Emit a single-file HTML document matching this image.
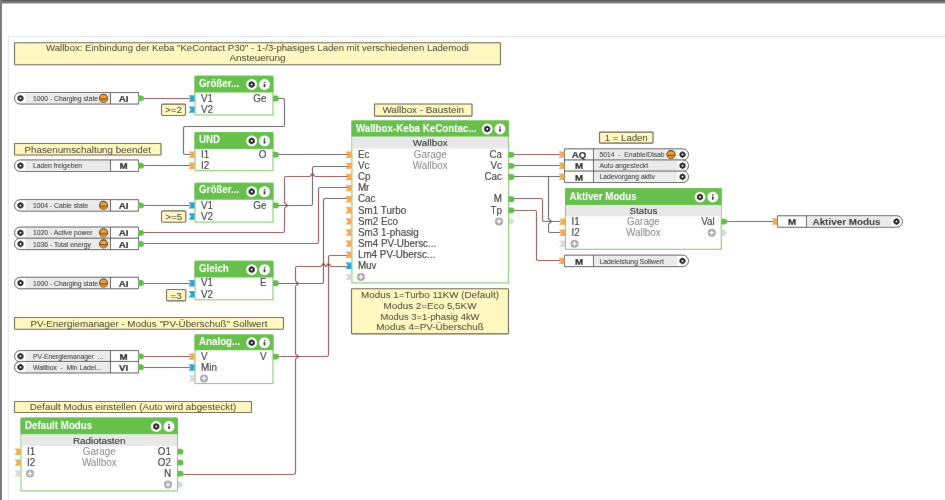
<!DOCTYPE html>
<html><head><meta charset="utf-8"><style>html,body{margin:0;padding:0;background:#fff;width:945px;height:500px;overflow:hidden}</style></head>
<body><svg width="945" height="500" viewBox="0 0 945 500" style="display:block;font-family:'Liberation Sans', sans-serif"><defs><filter id="bl" x="0" y="0" width="100%" height="100%" filterUnits="userSpaceOnUse"><feConvolveMatrix order="3" kernelMatrix="0.008 0.04 0.008 0.04 0.808 0.04 0.008 0.04 0.008" edgeMode="duplicate"/></filter></defs><g filter="url(#bl)"><rect x="0" y="0" width="945" height="500" fill="#fff"/>
<rect x="0" y="0" width="945" height="1" fill="#565656"/>
<rect x="0" y="1" width="945" height="1" fill="#7c7c7c"/>
<rect x="0" y="2" width="945" height="1" fill="#6a6a6a"/>
<rect x="0" y="3" width="945" height="1" fill="#c8c8c8"/>
<rect x="0" y="0" width="2" height="500" fill="#7a7a7a"/>
<line x1="8" y1="36.5" x2="945" y2="36.5" stroke="#e4e4e4" stroke-width="1"/>
<line x1="8.5" y1="36" x2="8.5" y2="500" stroke="#e8e8e8" stroke-width="1"/>
<path d="M143.50,98.50 L190.50,98.50" fill="none" stroke="#983c3c" stroke-width="1.1"/>
<path d="M276.50,98.50 L282.70,98.50 Q284.50,98.50 284.50,100.30 L284.50,124.70 Q284.50,126.50 282.70,126.50 L185.30,126.50 Q183.50,126.50 183.50,128.30 L183.50,152.70 Q183.50,154.50 185.30,154.50 L190.50,154.50" fill="none" stroke="#555555" stroke-width="1.1"/>
<path d="M143.50,165.50 L190.50,165.50" fill="none" stroke="#555555" stroke-width="1.1"/>
<path d="M276.50,154.50 L348.50,154.50" fill="none" stroke="#555555" stroke-width="1.1"/>
<path d="M143.50,205.50 L190.50,205.50" fill="none" stroke="#983c3c" stroke-width="1.1"/>
<path d="M276.50,205.50 L310.70,205.50 Q312.50,205.50 312.50,203.70 L312.50,168.30 Q312.50,166.50 314.30,166.50 L348.50,166.50" fill="none" stroke="#555555" stroke-width="1.1"/>
<path d="M143.50,232.50 L282.70,232.50 Q284.50,232.50 284.50,230.70 L284.50,208.50 Q284.50,207.30 286.70,206.40 Q288.10,205.50 286.70,204.60 Q284.50,203.70 284.50,202.50 L284.50,178.30 Q284.50,176.50 286.30,176.50 L309.50,176.50 Q310.70,176.50 311.60,174.30 Q312.50,172.90 313.40,174.30 Q314.30,176.50 315.50,176.50 L348.50,176.50" fill="none" stroke="#983c3c" stroke-width="1.1"/>
<path d="M143.50,243.50 L316.70,243.50 Q318.50,243.50 318.50,241.70 L318.50,189.30 Q318.50,187.50 320.30,187.50 L348.50,187.50" fill="none" stroke="#983c3c" stroke-width="1.1"/>
<path d="M143.50,283.50 L190.50,283.50" fill="none" stroke="#983c3c" stroke-width="1.1"/>
<path d="M276.50,283.50 L321.70,283.50 Q323.50,283.50 323.50,281.70 L323.50,200.30 Q323.50,198.50 325.30,198.50 L348.50,198.50" fill="none" stroke="#555555" stroke-width="1.1"/>
<path d="M180.50,474.50 L293.70,474.50 Q295.50,474.50 295.50,472.70 L295.50,359.50 Q295.50,358.30 297.70,357.40 Q299.10,356.50 297.70,355.60 Q295.50,354.70 295.50,353.50 L295.50,286.50 Q295.50,285.30 297.70,284.40 Q299.10,283.50 297.70,282.60 Q295.50,281.70 295.50,280.50 L295.50,268.30 Q295.50,266.50 297.30,266.50 L320.50,266.50 Q321.70,266.50 322.60,264.30 Q323.50,262.90 324.40,264.30 Q325.30,266.50 326.50,266.50 L325.50,266.50 Q326.70,266.50 327.60,264.30 Q328.50,262.90 329.40,264.30 Q330.30,266.50 331.50,266.50 L348.50,266.50" fill="none" stroke="#983c3c" stroke-width="1.1"/>
<path d="M276.50,356.50 L326.70,356.50 Q328.50,356.50 328.50,354.70 L328.50,257.30 Q328.50,255.50 330.30,255.50 L348.50,255.50" fill="none" stroke="#983c3c" stroke-width="1.1"/>
<path d="M143.50,356.50 L190.50,356.50" fill="none" stroke="#983c3c" stroke-width="1.1"/>
<path d="M143.50,367.50 L190.50,367.50" fill="none" stroke="#983c3c" stroke-width="1.1"/>
<path d="M511.50,154.50 L560.50,154.50" fill="none" stroke="#983c3c" stroke-width="1.1"/>
<path d="M511.50,165.50 L560.50,165.50" fill="none" stroke="#555555" stroke-width="1.1"/>
<path d="M511.50,176.50 L560.50,176.50" fill="none" stroke="#555555" stroke-width="1.1"/>
<path d="M548.50,176.50 L548.50,218.50 Q548.50,219.70 550.70,220.60 Q552.10,221.50 550.70,222.40 Q548.50,223.30 548.50,224.50 L548.50,230.70 Q548.50,232.50 550.30,232.50 L560.50,232.50" fill="none" stroke="#555555" stroke-width="1.1"/>
<path d="M511.50,198.50 L540.70,198.50 Q542.50,198.50 542.50,200.30 L542.50,219.70 Q542.50,221.50 544.30,221.50 L560.50,221.50" fill="none" stroke="#983c3c" stroke-width="1.1"/>
<path d="M511.50,210.50 L534.70,210.50 Q536.50,210.50 536.50,212.30 L536.50,258.70 Q536.50,260.50 538.30,260.50 L560.50,260.50" fill="none" stroke="#983c3c" stroke-width="1.1"/>
<path d="M724.50,221.50 L773.50,221.50" fill="none" stroke="#983c3c" stroke-width="1.1"/>
<rect x="14.5" y="42.7" width="486" height="22.0" rx="0.6" fill="#fff8c0" stroke="#625d4c" stroke-width="1.1"/>
<text transform="translate(257.50 50.80) scale(0.988 1)" font-size="9.7" font-weight="normal" fill="#33322b" text-anchor="middle" >Wallbox: Einbindung der Keba &quot;KeContact P30&quot; - 1-/3-phasiges Laden mit verschiedenen Lademodi</text>
<text transform="translate(257.50 60.90) scale(1.022 1)" font-size="9.7" font-weight="normal" fill="#33322b" text-anchor="middle" >Ansteuerung</text>
<rect x="14.5" y="143.5" width="146.5" height="11.5" rx="0.6" fill="#fff8c0" stroke="#625d4c" stroke-width="1.1"/>
<text transform="translate(87.75 152.80) scale(1.007 1)" font-size="9.7" font-weight="normal" fill="#33322b" text-anchor="middle" >Phasenumschaltung beendet</text>
<rect x="374.5" y="104.0" width="97.5" height="12.099999999999994" rx="0.6" fill="#fff8c0" stroke="#625d4c" stroke-width="1.1"/>
<text transform="translate(423.25 113.30) scale(1.016 1)" font-size="9.7" font-weight="normal" fill="#33322b" text-anchor="middle" >Wallbox - Baustein</text>
<rect x="599.5" y="132.1" width="53.5" height="11.0" rx="0.6" fill="#fff8c0" stroke="#625d4c" stroke-width="1.1"/>
<text transform="translate(626.25 141.00) scale(0.99 1)" font-size="9.7" font-weight="normal" fill="#33322b" text-anchor="middle" >1 = Laden</text>
<rect x="14.5" y="317.5" width="269" height="11.699999999999989" rx="0.6" fill="#fff8c0" stroke="#625d4c" stroke-width="1.1"/>
<text transform="translate(149.00 326.50) scale(1.009 1)" font-size="9.7" font-weight="normal" fill="#33322b" text-anchor="middle" >PV-Energiemanager - Modus &quot;PV-Überschuß&quot; Sollwert</text>
<rect x="14.5" y="401.5" width="237" height="11" rx="0.6" fill="#fff8c0" stroke="#625d4c" stroke-width="1.1"/>
<text transform="translate(133.00 410.40) scale(1.005 1)" font-size="9.7" font-weight="normal" fill="#33322b" text-anchor="middle" >Default Modus einstellen (Auto wird abgesteckt)</text>
<rect x="351.5" y="288.8" width="157" height="45.099999999999966" rx="0.6" fill="#fff8c0" stroke="#625d4c" stroke-width="1.1"/>
<text transform="translate(430.00 298.00) scale(1.014 1)" font-size="9.7" font-weight="normal" fill="#33322b" text-anchor="middle" >Modus 1=Turbo 11KW (Default)</text>
<text transform="translate(430.00 308.75) scale(1.019 1)" font-size="9.7" font-weight="normal" fill="#33322b" text-anchor="middle" >Modus 2=Eco 5,5KW</text>
<text transform="translate(430.00 319.50) scale(0.969 1)" font-size="9.7" font-weight="normal" fill="#33322b" text-anchor="middle" >Modus 3=1-phasig 4kW</text>
<text transform="translate(430.00 330.25) scale(1.016 1)" font-size="9.7" font-weight="normal" fill="#33322b" text-anchor="middle" >Modus 4=PV-Überschuß</text>
<path d="M20.25,92.55 H138.50 V104.05 H20.25 A5.75,5.75 0 0 1 20.25,92.55 Z" fill="#fff" stroke="#555" stroke-width="1"/>
<rect x="25.50" y="93.55" width="85.00" height="9.50" fill="#ebebeb"/>
<path d="M20.50,101.24 L17.95,99.77 L17.95,96.83 L20.50,95.36 L23.05,96.83 L23.05,99.77Z" fill="#111" stroke="#111" stroke-width="0.83" stroke-linejoin="round"/>
<circle cx="20.50" cy="98.30" r="1.01" fill="#fff"/>
<line x1="110.5" y1="92.55" x2="110.5" y2="104.05" stroke="#555" stroke-width="1"/>
<text transform="translate(33.00 100.90) scale(0.93 1)" font-size="7.3" font-weight="normal" fill="#404040" stroke="#404040" stroke-width="0.1" text-anchor="start" >1000 - Charging state</text>
<circle cx="103.5" cy="98.3" r="4.0" fill="#eda43c" stroke="#5e3c14" stroke-width="1.1"/>
<path d="M100.10,99.20 A3.40,3.40 0 0 0 106.90,99.20 Z" fill="#c88a30"/>
<path d="M100.30,98.90 h6.40" stroke="#6e4614" stroke-width="0.9"/>
<text x="123.70" y="101.90" font-size="9.8" font-weight="bold" fill="#1a1a1a" stroke="#1a1a1a" stroke-width="0.22" text-anchor="middle" >AI</text>
<path d="M138.00,95.40 H141.10 A2.9,2.9 0 0 1 141.10,101.20 H138.00 Z" fill="#5fbf47"/>
<path d="M20.25,159.95 H138.50 V171.45 H20.25 A5.75,5.75 0 0 1 20.25,159.95 Z" fill="#fff" stroke="#555" stroke-width="1"/>
<rect x="25.50" y="160.95" width="85.00" height="9.50" fill="#ebebeb"/>
<path d="M20.50,168.64 L17.95,167.17 L17.95,164.23 L20.50,162.76 L23.05,164.23 L23.05,167.17Z" fill="#111" stroke="#111" stroke-width="0.83" stroke-linejoin="round"/>
<circle cx="20.50" cy="165.70" r="1.01" fill="#fff"/>
<line x1="110.5" y1="159.95" x2="110.5" y2="171.45" stroke="#555" stroke-width="1"/>
<text transform="translate(33.00 168.30) scale(0.93 1)" font-size="7.3" font-weight="normal" fill="#404040" stroke="#404040" stroke-width="0.1" text-anchor="start" >Laden freigeben</text>
<text x="123.70" y="169.30" font-size="9.8" font-weight="bold" fill="#1a1a1a" stroke="#1a1a1a" stroke-width="0.22" text-anchor="middle" >M</text>
<path d="M138.00,162.80 H141.10 A2.9,2.9 0 0 1 141.10,168.60 H138.00 Z" fill="#5fbf47"/>
<path d="M20.25,199.65 H138.50 V211.15 H20.25 A5.75,5.75 0 0 1 20.25,199.65 Z" fill="#fff" stroke="#555" stroke-width="1"/>
<rect x="25.50" y="200.65" width="85.00" height="9.50" fill="#ebebeb"/>
<path d="M20.50,208.34 L17.95,206.87 L17.95,203.93 L20.50,202.46 L23.05,203.93 L23.05,206.87Z" fill="#111" stroke="#111" stroke-width="0.83" stroke-linejoin="round"/>
<circle cx="20.50" cy="205.40" r="1.01" fill="#fff"/>
<line x1="110.5" y1="199.65" x2="110.5" y2="211.15" stroke="#555" stroke-width="1"/>
<text transform="translate(33.00 208.00) scale(0.93 1)" font-size="7.3" font-weight="normal" fill="#404040" stroke="#404040" stroke-width="0.1" text-anchor="start" >1004 - Cable state</text>
<circle cx="103.5" cy="205.4" r="4.0" fill="#eda43c" stroke="#5e3c14" stroke-width="1.1"/>
<path d="M100.10,206.30 A3.40,3.40 0 0 0 106.90,206.30 Z" fill="#c88a30"/>
<path d="M100.30,206.00 h6.40" stroke="#6e4614" stroke-width="0.9"/>
<text x="123.70" y="209.00" font-size="9.8" font-weight="bold" fill="#1a1a1a" stroke="#1a1a1a" stroke-width="0.22" text-anchor="middle" >AI</text>
<path d="M138.00,202.50 H141.10 A2.9,2.9 0 0 1 141.10,208.30 H138.00 Z" fill="#5fbf47"/>
<path d="M20.25,227.05 H138.50 V238.55 H20.25 A5.75,5.75 0 0 1 20.25,227.05 Z" fill="#fff" stroke="#555" stroke-width="1"/>
<rect x="25.50" y="228.05" width="85.00" height="9.50" fill="#ebebeb"/>
<path d="M20.50,235.74 L17.95,234.27 L17.95,231.33 L20.50,229.86 L23.05,231.33 L23.05,234.27Z" fill="#111" stroke="#111" stroke-width="0.83" stroke-linejoin="round"/>
<circle cx="20.50" cy="232.80" r="1.01" fill="#fff"/>
<line x1="110.5" y1="227.05" x2="110.5" y2="238.55" stroke="#555" stroke-width="1"/>
<text transform="translate(33.00 235.40) scale(0.93 1)" font-size="7.3" font-weight="normal" fill="#404040" stroke="#404040" stroke-width="0.1" text-anchor="start" >1020 - Active power</text>
<circle cx="103.5" cy="232.8" r="4.0" fill="#eda43c" stroke="#5e3c14" stroke-width="1.1"/>
<path d="M100.10,233.70 A3.40,3.40 0 0 0 106.90,233.70 Z" fill="#c88a30"/>
<path d="M100.30,233.40 h6.40" stroke="#6e4614" stroke-width="0.9"/>
<text x="123.70" y="236.40" font-size="9.8" font-weight="bold" fill="#1a1a1a" stroke="#1a1a1a" stroke-width="0.22" text-anchor="middle" >AI</text>
<path d="M138.00,229.90 H141.10 A2.9,2.9 0 0 1 141.10,235.70 H138.00 Z" fill="#5fbf47"/>
<path d="M20.25,238.15 H138.50 V249.65 H20.25 A5.75,5.75 0 0 1 20.25,238.15 Z" fill="#fff" stroke="#555" stroke-width="1"/>
<rect x="25.50" y="239.15" width="85.00" height="9.50" fill="#ebebeb"/>
<path d="M20.50,246.84 L17.95,245.37 L17.95,242.43 L20.50,240.96 L23.05,242.43 L23.05,245.37Z" fill="#111" stroke="#111" stroke-width="0.83" stroke-linejoin="round"/>
<circle cx="20.50" cy="243.90" r="1.01" fill="#fff"/>
<line x1="110.5" y1="238.15" x2="110.5" y2="249.65" stroke="#555" stroke-width="1"/>
<text transform="translate(33.00 246.50) scale(0.93 1)" font-size="7.3" font-weight="normal" fill="#404040" stroke="#404040" stroke-width="0.1" text-anchor="start" >1036 - Total energy</text>
<circle cx="103.5" cy="243.9" r="4.0" fill="#eda43c" stroke="#5e3c14" stroke-width="1.1"/>
<path d="M100.10,244.80 A3.40,3.40 0 0 0 106.90,244.80 Z" fill="#c88a30"/>
<path d="M100.30,244.50 h6.40" stroke="#6e4614" stroke-width="0.9"/>
<text x="123.70" y="247.50" font-size="9.8" font-weight="bold" fill="#1a1a1a" stroke="#1a1a1a" stroke-width="0.22" text-anchor="middle" >AI</text>
<path d="M138.00,241.00 H141.10 A2.9,2.9 0 0 1 141.10,246.80 H138.00 Z" fill="#5fbf47"/>
<path d="M20.25,277.25 H138.50 V288.75 H20.25 A5.75,5.75 0 0 1 20.25,277.25 Z" fill="#fff" stroke="#555" stroke-width="1"/>
<rect x="25.50" y="278.25" width="85.00" height="9.50" fill="#ebebeb"/>
<path d="M20.50,285.94 L17.95,284.47 L17.95,281.53 L20.50,280.06 L23.05,281.53 L23.05,284.47Z" fill="#111" stroke="#111" stroke-width="0.83" stroke-linejoin="round"/>
<circle cx="20.50" cy="283.00" r="1.01" fill="#fff"/>
<line x1="110.5" y1="277.25" x2="110.5" y2="288.75" stroke="#555" stroke-width="1"/>
<text transform="translate(33.00 285.60) scale(0.93 1)" font-size="7.3" font-weight="normal" fill="#404040" stroke="#404040" stroke-width="0.1" text-anchor="start" >1000 - Charging state</text>
<circle cx="103.5" cy="283" r="4.0" fill="#eda43c" stroke="#5e3c14" stroke-width="1.1"/>
<path d="M100.10,283.90 A3.40,3.40 0 0 0 106.90,283.90 Z" fill="#c88a30"/>
<path d="M100.30,283.60 h6.40" stroke="#6e4614" stroke-width="0.9"/>
<text x="123.70" y="286.60" font-size="9.8" font-weight="bold" fill="#1a1a1a" stroke="#1a1a1a" stroke-width="0.22" text-anchor="middle" >AI</text>
<path d="M138.00,280.10 H141.10 A2.9,2.9 0 0 1 141.10,285.90 H138.00 Z" fill="#5fbf47"/>
<path d="M20.25,350.55 H138.50 V362.05 H20.25 A5.75,5.75 0 0 1 20.25,350.55 Z" fill="#fff" stroke="#555" stroke-width="1"/>
<rect x="25.50" y="351.55" width="85.00" height="9.50" fill="#ebebeb"/>
<path d="M20.50,359.24 L17.95,357.77 L17.95,354.83 L20.50,353.36 L23.05,354.83 L23.05,357.77Z" fill="#111" stroke="#111" stroke-width="0.83" stroke-linejoin="round"/>
<circle cx="20.50" cy="356.30" r="1.01" fill="#fff"/>
<line x1="110.5" y1="350.55" x2="110.5" y2="362.05" stroke="#555" stroke-width="1"/>
<text transform="translate(33.00 358.90) scale(0.93 1)" font-size="7.3" font-weight="normal" fill="#404040" stroke="#404040" stroke-width="0.1" text-anchor="start" >PV-Energiemanager  ...</text>
<text x="123.70" y="359.90" font-size="9.8" font-weight="bold" fill="#1a1a1a" stroke="#1a1a1a" stroke-width="0.22" text-anchor="middle" >M</text>
<path d="M138.00,353.40 H141.10 A2.9,2.9 0 0 1 141.10,359.20 H138.00 Z" fill="#5fbf47"/>
<path d="M20.25,361.45 H138.50 V372.95 H20.25 A5.75,5.75 0 0 1 20.25,361.45 Z" fill="#fff" stroke="#555" stroke-width="1"/>
<rect x="25.50" y="362.45" width="85.00" height="9.50" fill="#ebebeb"/>
<path d="M20.50,370.14 L17.95,368.67 L17.95,365.73 L20.50,364.26 L23.05,365.73 L23.05,368.67Z" fill="#111" stroke="#111" stroke-width="0.83" stroke-linejoin="round"/>
<circle cx="20.50" cy="367.20" r="1.01" fill="#fff"/>
<line x1="110.5" y1="361.45" x2="110.5" y2="372.95" stroke="#555" stroke-width="1"/>
<text transform="translate(33.00 369.80) scale(0.93 1)" font-size="7.3" font-weight="normal" fill="#404040" stroke="#404040" stroke-width="0.1" text-anchor="start" >Wallbox  -  Min Ladel...</text>
<text x="123.70" y="370.80" font-size="9.8" font-weight="bold" fill="#1a1a1a" stroke="#1a1a1a" stroke-width="0.22" text-anchor="middle" >VI</text>
<path d="M138.00,364.30 H141.10 A2.9,2.9 0 0 1 141.10,370.10 H138.00 Z" fill="#5fbf47"/>
<rect x="161.50" y="104.10" width="24.00" height="11.40" rx="1.2" fill="#fff8c0" stroke="#625d4c" stroke-width="1.1"/>
<text x="173.50" y="113.30" font-size="9.9" font-weight="normal" fill="#33322b" text-anchor="middle" >&gt;=2</text>
<rect x="161.50" y="210.90" width="24.30" height="11.40" rx="1.2" fill="#fff8c0" stroke="#625d4c" stroke-width="1.1"/>
<text x="173.65" y="220.10" font-size="9.9" font-weight="normal" fill="#33322b" text-anchor="middle" >&gt;=5</text>
<rect x="166.50" y="289.50" width="19.30" height="11.40" rx="1.2" fill="#fff8c0" stroke="#625d4c" stroke-width="1.1"/>
<text x="176.15" y="298.70" font-size="9.9" font-weight="normal" fill="#33322b" text-anchor="middle" >=3</text>
<rect x="195.00" y="76.20" width="78.00" height="38.80" fill="#fff" stroke="#84cc6c" stroke-width="1.1"/>
<path d="M194.50,92.50 V77.70 Q194.50,75.70 196.50,75.70 H271.50 Q273.50,75.70 273.50,77.70 V92.50 Z" fill="#66c04b"/>
<text transform="translate(199.00 86.70) scale(0.93 1)" font-size="10.5" font-weight="bold" fill="#fff" text-anchor="start" >Größer...</text>
<circle cx="251.70" cy="84.50" r="5.4" fill="#fff"/>
<path d="M251.70,87.54 L249.07,86.02 L249.07,82.98 L251.70,81.46 L254.33,82.98 L254.33,86.02Z" fill="#111" stroke="#111" stroke-width="0.85" stroke-linejoin="round"/>
<circle cx="251.70" cy="84.50" r="1.04" fill="#fff"/>
<circle cx="264.50" cy="84.50" r="5.4" fill="#fff"/>
<rect x="263.65" y="84.10" width="1.7" height="3.0" fill="#111"/>
<circle cx="264.50" cy="82.50" r="0.8" fill="#111"/>
<text transform="translate(201.00 101.70) scale(0.95 1)" font-size="10.4" font-weight="normal" fill="#222" stroke="#222" stroke-width="0.08" text-anchor="start" >V1</text>
<path d="M188.50,95.30 H194.50 V101.70 H188.50 L190.90,98.50 Z" fill="#22a6d6"/>
<text transform="translate(201.00 112.80) scale(0.95 1)" font-size="10.4" font-weight="normal" fill="#222" stroke="#222" stroke-width="0.08" text-anchor="start" >V2</text>
<path d="M188.50,106.40 H194.50 V112.80 H188.50 L190.90,109.60 Z" fill="#22a6d6"/>
<text transform="translate(266.50 101.70) scale(0.95 1)" font-size="10.4" font-weight="normal" fill="#222" stroke="#222" stroke-width="0.08" text-anchor="end" >Ge</text>
<path d="M273.00,95.60 H276.10 A2.9,2.9 0 0 1 276.10,101.40 H273.00 Z" fill="#5fbf47"/>
<rect x="195.00" y="132.50" width="78.00" height="38.20" fill="#fff" stroke="#84cc6c" stroke-width="1.1"/>
<path d="M194.50,149.00 V134.00 Q194.50,132.00 196.50,132.00 H271.50 Q273.50,132.00 273.50,134.00 V149.00 Z" fill="#66c04b"/>
<text transform="translate(199.00 143.40) scale(0.93 1)" font-size="10.5" font-weight="bold" fill="#fff" text-anchor="start" >UND</text>
<circle cx="251.70" cy="140.90" r="5.4" fill="#fff"/>
<path d="M251.70,143.94 L249.07,142.42 L249.07,139.38 L251.70,137.86 L254.33,139.38 L254.33,142.42Z" fill="#111" stroke="#111" stroke-width="0.85" stroke-linejoin="round"/>
<circle cx="251.70" cy="140.90" r="1.04" fill="#fff"/>
<circle cx="264.50" cy="140.90" r="5.4" fill="#fff"/>
<rect x="263.65" y="140.50" width="1.7" height="3.0" fill="#111"/>
<circle cx="264.50" cy="138.90" r="0.8" fill="#111"/>
<text transform="translate(201.00 157.90) scale(0.95 1)" font-size="10.4" font-weight="normal" fill="#222" stroke="#222" stroke-width="0.08" text-anchor="start" >I1</text>
<path d="M188.50,151.50 H194.50 V157.90 H188.50 L190.90,154.70 Z" fill="#f5aa4c"/>
<text transform="translate(201.00 169.00) scale(0.95 1)" font-size="10.4" font-weight="normal" fill="#222" stroke="#222" stroke-width="0.08" text-anchor="start" >I2</text>
<path d="M188.50,162.60 H194.50 V169.00 H188.50 L190.90,165.80 Z" fill="#f5aa4c"/>
<text transform="translate(266.50 157.90) scale(0.95 1)" font-size="10.4" font-weight="normal" fill="#222" stroke="#222" stroke-width="0.08" text-anchor="end" >O</text>
<path d="M273.00,151.80 H276.10 A2.9,2.9 0 0 1 276.10,157.60 H273.00 Z" fill="#5fbf47"/>
<rect x="195.00" y="183.30" width="78.00" height="38.80" fill="#fff" stroke="#84cc6c" stroke-width="1.1"/>
<path d="M194.50,199.70 V184.80 Q194.50,182.80 196.50,182.80 H271.50 Q273.50,182.80 273.50,184.80 V199.70 Z" fill="#66c04b"/>
<text transform="translate(199.00 193.45) scale(0.93 1)" font-size="10.5" font-weight="bold" fill="#fff" text-anchor="start" >Größer...</text>
<circle cx="251.70" cy="191.65" r="5.4" fill="#fff"/>
<path d="M251.70,194.69 L249.07,193.17 L249.07,190.13 L251.70,188.61 L254.33,190.13 L254.33,193.17Z" fill="#111" stroke="#111" stroke-width="0.85" stroke-linejoin="round"/>
<circle cx="251.70" cy="191.65" r="1.04" fill="#fff"/>
<circle cx="264.50" cy="191.65" r="5.4" fill="#fff"/>
<rect x="263.65" y="191.25" width="1.7" height="3.0" fill="#111"/>
<circle cx="264.50" cy="189.65" r="0.8" fill="#111"/>
<text transform="translate(201.00 208.60) scale(0.95 1)" font-size="10.4" font-weight="normal" fill="#222" stroke="#222" stroke-width="0.08" text-anchor="start" >V1</text>
<path d="M188.50,202.20 H194.50 V208.60 H188.50 L190.90,205.40 Z" fill="#22a6d6"/>
<text transform="translate(201.00 219.70) scale(0.95 1)" font-size="10.4" font-weight="normal" fill="#222" stroke="#222" stroke-width="0.08" text-anchor="start" >V2</text>
<path d="M188.50,213.30 H194.50 V219.70 H188.50 L190.90,216.50 Z" fill="#22a6d6"/>
<text transform="translate(266.50 208.60) scale(0.95 1)" font-size="10.4" font-weight="normal" fill="#222" stroke="#222" stroke-width="0.08" text-anchor="end" >Ge</text>
<path d="M273.00,202.50 H276.10 A2.9,2.9 0 0 1 276.10,208.30 H273.00 Z" fill="#5fbf47"/>
<rect x="195.00" y="261.30" width="78.00" height="38.50" fill="#fff" stroke="#84cc6c" stroke-width="1.1"/>
<path d="M194.50,277.60 V262.80 Q194.50,260.80 196.50,260.80 H271.50 Q273.50,260.80 273.50,262.80 V277.60 Z" fill="#66c04b"/>
<text transform="translate(199.00 272.10) scale(0.93 1)" font-size="10.5" font-weight="bold" fill="#fff" text-anchor="start" >Gleich</text>
<circle cx="251.70" cy="269.60" r="5.4" fill="#fff"/>
<path d="M251.70,272.64 L249.07,271.12 L249.07,268.08 L251.70,266.56 L254.33,268.08 L254.33,271.12Z" fill="#111" stroke="#111" stroke-width="0.85" stroke-linejoin="round"/>
<circle cx="251.70" cy="269.60" r="1.04" fill="#fff"/>
<circle cx="264.50" cy="269.60" r="5.4" fill="#fff"/>
<rect x="263.65" y="269.20" width="1.7" height="3.0" fill="#111"/>
<circle cx="264.50" cy="267.60" r="0.8" fill="#111"/>
<text transform="translate(201.00 286.40) scale(0.95 1)" font-size="10.4" font-weight="normal" fill="#222" stroke="#222" stroke-width="0.08" text-anchor="start" >V1</text>
<path d="M188.50,280.00 H194.50 V286.40 H188.50 L190.90,283.20 Z" fill="#22a6d6"/>
<text transform="translate(201.00 297.50) scale(0.95 1)" font-size="10.4" font-weight="normal" fill="#222" stroke="#222" stroke-width="0.08" text-anchor="start" >V2</text>
<path d="M188.50,291.10 H194.50 V297.50 H188.50 L190.90,294.30 Z" fill="#22a6d6"/>
<text transform="translate(266.50 286.40) scale(0.95 1)" font-size="10.4" font-weight="normal" fill="#222" stroke="#222" stroke-width="0.08" text-anchor="end" >E</text>
<path d="M273.00,280.30 H276.10 A2.9,2.9 0 0 1 276.10,286.10 H273.00 Z" fill="#5fbf47"/>
<rect x="195.00" y="334.90" width="78.00" height="48.60" fill="#fff" stroke="#84cc6c" stroke-width="1.1"/>
<path d="M194.50,350.20 V336.40 Q194.50,334.40 196.50,334.40 H271.50 Q273.50,334.40 273.50,336.40 V350.20 Z" fill="#66c04b"/>
<text transform="translate(199.00 344.80) scale(0.93 1)" font-size="10.5" font-weight="bold" fill="#fff" text-anchor="start" >Analog...</text>
<circle cx="251.70" cy="342.70" r="5.4" fill="#fff"/>
<path d="M251.70,345.74 L249.07,344.22 L249.07,341.18 L251.70,339.66 L254.33,341.18 L254.33,344.22Z" fill="#111" stroke="#111" stroke-width="0.85" stroke-linejoin="round"/>
<circle cx="251.70" cy="342.70" r="1.04" fill="#fff"/>
<circle cx="264.50" cy="342.70" r="5.4" fill="#fff"/>
<rect x="263.65" y="342.30" width="1.7" height="3.0" fill="#111"/>
<circle cx="264.50" cy="340.70" r="0.8" fill="#111"/>
<text transform="translate(201.00 359.80) scale(0.95 1)" font-size="10.4" font-weight="normal" fill="#222" stroke="#222" stroke-width="0.08" text-anchor="start" >V</text>
<path d="M188.50,353.40 H194.50 V359.80 H188.50 L190.90,356.60 Z" fill="#f5aa4c"/>
<text transform="translate(201.00 370.70) scale(0.95 1)" font-size="10.4" font-weight="normal" fill="#222" stroke="#222" stroke-width="0.08" text-anchor="start" >Min</text>
<path d="M188.50,364.30 H194.50 V370.70 H188.50 L190.90,367.50 Z" fill="#22a6d6"/>
<circle cx="204.00" cy="378.40" r="4" fill="#a8a8a8"/>
<path d="M201.70,378.40 h4.6 M204.00,376.10 v4.6" stroke="#fff" stroke-width="1.3"/>
<path d="M188.50,375.20 H194.50 V381.60 H188.50 L190.90,378.40 Z" fill="#dadada"/>
<text transform="translate(266.50 359.80) scale(0.95 1)" font-size="10.4" font-weight="normal" fill="#222" stroke="#222" stroke-width="0.08" text-anchor="end" >V</text>
<path d="M273.00,353.70 H276.10 A2.9,2.9 0 0 1 276.10,359.50 H273.00 Z" fill="#5fbf47"/>
<rect x="351.90" y="120.90" width="156.60" height="162.00" fill="#fff" stroke="#84cc6c" stroke-width="1.1"/>
<path d="M351.40,136.80 V122.40 Q351.40,120.40 353.40,120.40 H507.00 Q509.00,120.40 509.00,122.40 V136.80 Z" fill="#66c04b"/>
<text transform="translate(355.90 131.50) scale(0.93 1)" font-size="10.5" font-weight="bold" fill="#fff" text-anchor="start" >Wallbox-Keba KeContac...</text>
<circle cx="487.20" cy="129.00" r="5.4" fill="#fff"/>
<path d="M487.20,132.04 L484.57,130.52 L484.57,127.48 L487.20,125.96 L489.83,127.48 L489.83,130.52Z" fill="#111" stroke="#111" stroke-width="0.85" stroke-linejoin="round"/>
<circle cx="487.20" cy="129.00" r="1.04" fill="#fff"/>
<circle cx="500.00" cy="129.00" r="5.4" fill="#fff"/>
<rect x="499.15" y="128.60" width="1.7" height="3.0" fill="#111"/>
<circle cx="500.00" cy="127.00" r="0.8" fill="#111"/>
<rect x="352.40" y="136.80" width="155.60" height="11.80" fill="#e8e8e8"/>
<text x="430.20" y="146.30" font-size="9.9" font-weight="normal" fill="#222" stroke="#222" stroke-width="0.08" text-anchor="middle" >Wallbox</text>
<text transform="translate(357.90 158.00) scale(0.95 1)" font-size="10.4" font-weight="normal" fill="#222" stroke="#222" stroke-width="0.08" text-anchor="start" >Ec</text>
<path d="M345.40,151.60 H351.40 V158.00 H345.40 L347.80,154.80 Z" fill="#f5aa4c"/>
<text transform="translate(357.90 169.10) scale(0.95 1)" font-size="10.4" font-weight="normal" fill="#222" stroke="#222" stroke-width="0.08" text-anchor="start" >Vc</text>
<path d="M345.40,162.70 H351.40 V169.10 H345.40 L347.80,165.90 Z" fill="#f5aa4c"/>
<text transform="translate(357.90 180.20) scale(0.95 1)" font-size="10.4" font-weight="normal" fill="#222" stroke="#222" stroke-width="0.08" text-anchor="start" >Cp</text>
<path d="M345.40,173.80 H351.40 V180.20 H345.40 L347.80,177.00 Z" fill="#f5aa4c"/>
<text transform="translate(357.90 191.30) scale(0.95 1)" font-size="10.4" font-weight="normal" fill="#222" stroke="#222" stroke-width="0.08" text-anchor="start" >Mr</text>
<path d="M345.40,184.90 H351.40 V191.30 H345.40 L347.80,188.10 Z" fill="#f5aa4c"/>
<text transform="translate(357.90 202.40) scale(0.95 1)" font-size="10.4" font-weight="normal" fill="#222" stroke="#222" stroke-width="0.08" text-anchor="start" >Cac</text>
<path d="M345.40,196.00 H351.40 V202.40 H345.40 L347.80,199.20 Z" fill="#f5aa4c"/>
<text transform="translate(357.90 213.50) scale(0.95 1)" font-size="10.4" font-weight="normal" fill="#222" stroke="#222" stroke-width="0.08" text-anchor="start" >Sm1 Turbo</text>
<path d="M345.40,207.10 H351.40 V213.50 H345.40 L347.80,210.30 Z" fill="#f5aa4c"/>
<text transform="translate(357.90 224.60) scale(0.95 1)" font-size="10.4" font-weight="normal" fill="#222" stroke="#222" stroke-width="0.08" text-anchor="start" >Sm2 Eco</text>
<path d="M345.40,218.20 H351.40 V224.60 H345.40 L347.80,221.40 Z" fill="#f5aa4c"/>
<text transform="translate(357.90 235.70) scale(0.95 1)" font-size="10.4" font-weight="normal" fill="#222" stroke="#222" stroke-width="0.08" text-anchor="start" >Sm3 1-phasig</text>
<path d="M345.40,229.30 H351.40 V235.70 H345.40 L347.80,232.50 Z" fill="#f5aa4c"/>
<text transform="translate(357.90 246.80) scale(0.95 1)" font-size="10.4" font-weight="normal" fill="#222" stroke="#222" stroke-width="0.08" text-anchor="start" >Sm4 PV-Ubersc...</text>
<path d="M345.40,240.40 H351.40 V246.80 H345.40 L347.80,243.60 Z" fill="#f5aa4c"/>
<text transform="translate(357.90 257.90) scale(0.95 1)" font-size="10.4" font-weight="normal" fill="#222" stroke="#222" stroke-width="0.08" text-anchor="start" >Lm4 PV-Ubersc...</text>
<path d="M345.40,251.50 H351.40 V257.90 H345.40 L347.80,254.70 Z" fill="#f5aa4c"/>
<text transform="translate(357.90 269.00) scale(0.95 1)" font-size="10.4" font-weight="normal" fill="#222" stroke="#222" stroke-width="0.08" text-anchor="start" >Muv</text>
<path d="M345.40,262.60 H351.40 V269.00 H345.40 L347.80,265.80 Z" fill="#22a6d6"/>
<circle cx="360.90" cy="276.90" r="4" fill="#a8a8a8"/>
<path d="M358.60,276.90 h4.6 M360.90,274.60 v4.6" stroke="#fff" stroke-width="1.3"/>
<path d="M345.40,273.70 H351.40 V280.10 H345.40 L347.80,276.90 Z" fill="#dadada"/>
<text transform="translate(502.00 158.00) scale(0.95 1)" font-size="10.4" font-weight="normal" fill="#222" stroke="#222" stroke-width="0.08" text-anchor="end" >Ca</text>
<path d="M508.50,151.90 H511.60 A2.9,2.9 0 0 1 511.60,157.70 H508.50 Z" fill="#5fbf47"/>
<text transform="translate(502.00 169.10) scale(0.95 1)" font-size="10.4" font-weight="normal" fill="#222" stroke="#222" stroke-width="0.08" text-anchor="end" >Vc</text>
<path d="M508.50,163.00 H511.60 A2.9,2.9 0 0 1 511.60,168.80 H508.50 Z" fill="#5fbf47"/>
<text transform="translate(502.00 180.20) scale(0.95 1)" font-size="10.4" font-weight="normal" fill="#222" stroke="#222" stroke-width="0.08" text-anchor="end" >Cac</text>
<path d="M508.50,174.10 H511.60 A2.9,2.9 0 0 1 511.60,179.90 H508.50 Z" fill="#5fbf47"/>
<text transform="translate(502.00 202.40) scale(0.95 1)" font-size="10.4" font-weight="normal" fill="#222" stroke="#222" stroke-width="0.08" text-anchor="end" >M</text>
<path d="M508.50,196.30 H511.60 A2.9,2.9 0 0 1 511.60,202.10 H508.50 Z" fill="#5fbf47"/>
<text transform="translate(502.00 213.50) scale(0.95 1)" font-size="10.4" font-weight="normal" fill="#222" stroke="#222" stroke-width="0.08" text-anchor="end" >Tp</text>
<path d="M508.50,207.40 H511.60 A2.9,2.9 0 0 1 511.60,213.20 H508.50 Z" fill="#5fbf47"/>
<circle cx="499.00" cy="221.40" r="4" fill="#a8a8a8"/>
<path d="M496.70,221.40 h4.6 M499.00,219.10 v4.6" stroke="#fff" stroke-width="1.3"/>
<path d="M509.00,218.20 H511.50 L514.50,221.40 L511.50,224.60 H509.00 Z" fill="#dadada"/>
<text transform="translate(430.20 158.00) scale(0.95 1)" font-size="10.4" font-weight="normal" fill="#808080" text-anchor="middle" >Garage</text>
<text transform="translate(430.20 169.10) scale(0.95 1)" font-size="10.4" font-weight="normal" fill="#808080" text-anchor="middle" >Wallbox</text>
<rect x="565.50" y="188.50" width="155.80" height="60.80" fill="#fff" stroke="#84cc6c" stroke-width="1.1"/>
<path d="M565.00,205.30 V190.00 Q565.00,188.00 567.00,188.00 H719.80 Q721.80,188.00 721.80,190.00 V205.30 Z" fill="#66c04b"/>
<text transform="translate(569.50 199.55) scale(0.93 1)" font-size="10.5" font-weight="bold" fill="#fff" text-anchor="start" >Aktiver Modus</text>
<circle cx="700.00" cy="197.05" r="5.4" fill="#fff"/>
<path d="M700.00,200.09 L697.37,198.57 L697.37,195.53 L700.00,194.01 L702.63,195.53 L702.63,198.57Z" fill="#111" stroke="#111" stroke-width="0.85" stroke-linejoin="round"/>
<circle cx="700.00" cy="197.05" r="1.04" fill="#fff"/>
<circle cx="712.80" cy="197.05" r="5.4" fill="#fff"/>
<rect x="711.95" y="196.65" width="1.7" height="3.0" fill="#111"/>
<circle cx="712.80" cy="195.05" r="0.8" fill="#111"/>
<rect x="566.00" y="205.30" width="154.80" height="10.90" fill="#e8e8e8"/>
<text x="643.40" y="214.35" font-size="9.9" font-weight="normal" fill="#222" stroke="#222" stroke-width="0.08" text-anchor="middle" >Status</text>
<text transform="translate(571.50 224.80) scale(0.95 1)" font-size="10.4" font-weight="normal" fill="#222" stroke="#222" stroke-width="0.08" text-anchor="start" >I1</text>
<path d="M559.00,218.40 H565.00 V224.80 H559.00 L561.40,221.60 Z" fill="#f5aa4c"/>
<text transform="translate(571.50 235.90) scale(0.95 1)" font-size="10.4" font-weight="normal" fill="#222" stroke="#222" stroke-width="0.08" text-anchor="start" >I2</text>
<path d="M559.00,229.50 H565.00 V235.90 H559.00 L561.40,232.70 Z" fill="#f5aa4c"/>
<circle cx="574.50" cy="243.80" r="4" fill="#a8a8a8"/>
<path d="M572.20,243.80 h4.6 M574.50,241.50 v4.6" stroke="#fff" stroke-width="1.3"/>
<path d="M559.00,240.60 H565.00 V247.00 H559.00 L561.40,243.80 Z" fill="#dadada"/>
<text transform="translate(714.80 224.80) scale(0.95 1)" font-size="10.4" font-weight="normal" fill="#222" stroke="#222" stroke-width="0.08" text-anchor="end" >Val</text>
<path d="M721.30,218.70 H724.40 A2.9,2.9 0 0 1 724.40,224.50 H721.30 Z" fill="#5fbf47"/>
<circle cx="711.80" cy="232.70" r="4" fill="#a8a8a8"/>
<path d="M709.50,232.70 h4.6 M711.80,230.40 v4.6" stroke="#fff" stroke-width="1.3"/>
<path d="M721.80,229.50 H724.30 L727.30,232.70 L724.30,235.90 H721.80 Z" fill="#dadada"/>
<text transform="translate(643.40 224.80) scale(0.95 1)" font-size="10.4" font-weight="normal" fill="#808080" text-anchor="middle" >Garage</text>
<text transform="translate(643.40 235.90) scale(0.95 1)" font-size="10.4" font-weight="normal" fill="#808080" text-anchor="middle" >Wallbox</text>
<rect x="21.00" y="418.10" width="156.50" height="72.80" fill="#fff" stroke="#84cc6c" stroke-width="1.1"/>
<path d="M20.50,434.50 V419.60 Q20.50,417.60 22.50,417.60 H176.00 Q178.00,417.60 178.00,419.60 V434.50 Z" fill="#66c04b"/>
<text transform="translate(25.00 428.95) scale(0.93 1)" font-size="10.5" font-weight="bold" fill="#fff" text-anchor="start" >Default Modus</text>
<circle cx="156.20" cy="426.45" r="5.4" fill="#fff"/>
<path d="M156.20,429.49 L153.57,427.97 L153.57,424.93 L156.20,423.41 L158.83,424.93 L158.83,427.97Z" fill="#111" stroke="#111" stroke-width="0.85" stroke-linejoin="round"/>
<circle cx="156.20" cy="426.45" r="1.04" fill="#fff"/>
<circle cx="169.00" cy="426.45" r="5.4" fill="#fff"/>
<rect x="168.15" y="426.05" width="1.7" height="3.0" fill="#111"/>
<circle cx="169.00" cy="424.45" r="0.8" fill="#111"/>
<rect x="21.50" y="434.50" width="155.50" height="11.50" fill="#e8e8e8"/>
<text x="99.25" y="443.85" font-size="9.9" font-weight="normal" fill="#222" stroke="#222" stroke-width="0.08" text-anchor="middle" >Radiotasten</text>
<text transform="translate(27.00 454.90) scale(0.95 1)" font-size="10.4" font-weight="normal" fill="#222" stroke="#222" stroke-width="0.08" text-anchor="start" >I1</text>
<path d="M14.50,448.50 H20.50 V454.90 H14.50 L16.90,451.70 Z" fill="#f5aa4c"/>
<text transform="translate(27.00 465.85) scale(0.95 1)" font-size="10.4" font-weight="normal" fill="#222" stroke="#222" stroke-width="0.08" text-anchor="start" >I2</text>
<path d="M14.50,459.45 H20.50 V465.85 H14.50 L16.90,462.65 Z" fill="#f5aa4c"/>
<circle cx="30.00" cy="473.60" r="4" fill="#a8a8a8"/>
<path d="M27.70,473.60 h4.6 M30.00,471.30 v4.6" stroke="#fff" stroke-width="1.3"/>
<path d="M14.50,470.40 H20.50 V476.80 H14.50 L16.90,473.60 Z" fill="#dadada"/>
<text transform="translate(171.00 454.90) scale(0.95 1)" font-size="10.4" font-weight="normal" fill="#222" stroke="#222" stroke-width="0.08" text-anchor="end" >O1</text>
<path d="M177.50,448.80 H180.60 A2.9,2.9 0 0 1 180.60,454.60 H177.50 Z" fill="#5fbf47"/>
<text transform="translate(171.00 465.85) scale(0.95 1)" font-size="10.4" font-weight="normal" fill="#222" stroke="#222" stroke-width="0.08" text-anchor="end" >O2</text>
<path d="M177.50,459.75 H180.60 A2.9,2.9 0 0 1 180.60,465.55 H177.50 Z" fill="#5fbf47"/>
<text transform="translate(171.00 476.80) scale(0.95 1)" font-size="10.4" font-weight="normal" fill="#222" stroke="#222" stroke-width="0.08" text-anchor="end" >N</text>
<path d="M177.50,470.70 H180.60 A2.9,2.9 0 0 1 180.60,476.50 H177.50 Z" fill="#5fbf47"/>
<circle cx="168.00" cy="484.55" r="4" fill="#a8a8a8"/>
<path d="M165.70,484.55 h4.6 M168.00,482.25 v4.6" stroke="#fff" stroke-width="1.3"/>
<path d="M178.00,481.35 H180.50 L183.50,484.55 L180.50,487.75 H178.00 Z" fill="#dadada"/>
<text transform="translate(99.25 454.90) scale(0.95 1)" font-size="10.4" font-weight="normal" fill="#808080" text-anchor="middle" >Garage</text>
<text transform="translate(99.25 465.85) scale(0.95 1)" font-size="10.4" font-weight="normal" fill="#808080" text-anchor="middle" >Wallbox</text>
<path d="M564.50,148.85 H682.75 A5.75,5.75 0 0 1 682.75,160.35 H564.50 Z" fill="#fff" stroke="#555" stroke-width="1"/>
<rect x="594.50" y="149.85" width="83.00" height="9.50" fill="#ebebeb"/>
<line x1="593.5" y1="148.85" x2="593.5" y2="160.35" stroke="#555" stroke-width="1"/>
<text x="579.00" y="158.30" font-size="9.8" font-weight="bold" fill="#1a1a1a" stroke="#1a1a1a" stroke-width="0.22" text-anchor="middle" >AQ</text>
<text transform="translate(599.50 157.20) scale(0.93 1)" font-size="7.3" font-weight="normal" fill="#404040" stroke="#404040" stroke-width="0.1" text-anchor="start" >5014  -  Enable/Disab</text>
<circle cx="671.0" cy="154.6" r="4.0" fill="#eda43c" stroke="#5e3c14" stroke-width="1.1"/>
<path d="M667.60,155.50 A3.40,3.40 0 0 0 674.40,155.50 Z" fill="#c88a30"/>
<path d="M667.80,155.20 h6.40" stroke="#6e4614" stroke-width="0.9"/>
<path d="M682.50,157.54 L679.95,156.07 L679.95,153.13 L682.50,151.66 L685.05,153.13 L685.05,156.07Z" fill="#111" stroke="#111" stroke-width="0.83" stroke-linejoin="round"/>
<circle cx="682.50" cy="154.60" r="1.01" fill="#fff"/>
<path d="M558.50,151.40 H564.50 V157.80 H558.50 L560.90,154.60 Z" fill="#f5aa4c"/>
<path d="M564.50,159.95 H682.75 A5.75,5.75 0 0 1 682.75,171.45 H564.50 Z" fill="#fff" stroke="#555" stroke-width="1"/>
<rect x="594.50" y="160.95" width="83.00" height="9.50" fill="#ebebeb"/>
<line x1="593.5" y1="159.95" x2="593.5" y2="171.45" stroke="#555" stroke-width="1"/>
<text x="579.00" y="169.40" font-size="9.8" font-weight="bold" fill="#1a1a1a" stroke="#1a1a1a" stroke-width="0.22" text-anchor="middle" >M</text>
<text transform="translate(599.50 168.30) scale(0.93 1)" font-size="7.3" font-weight="normal" fill="#404040" stroke="#404040" stroke-width="0.1" text-anchor="start" >Auto angesteckt</text>
<path d="M682.50,168.64 L679.95,167.17 L679.95,164.23 L682.50,162.76 L685.05,164.23 L685.05,167.17Z" fill="#111" stroke="#111" stroke-width="0.83" stroke-linejoin="round"/>
<circle cx="682.50" cy="165.70" r="1.01" fill="#fff"/>
<path d="M558.50,162.50 H564.50 V168.90 H558.50 L560.90,165.70 Z" fill="#f5aa4c"/>
<path d="M564.50,171.05 H682.75 A5.75,5.75 0 0 1 682.75,182.55 H564.50 Z" fill="#fff" stroke="#555" stroke-width="1"/>
<rect x="594.50" y="172.05" width="83.00" height="9.50" fill="#ebebeb"/>
<line x1="593.5" y1="171.05" x2="593.5" y2="182.55" stroke="#555" stroke-width="1"/>
<text x="579.00" y="180.50" font-size="9.8" font-weight="bold" fill="#1a1a1a" stroke="#1a1a1a" stroke-width="0.22" text-anchor="middle" >M</text>
<text transform="translate(599.50 179.40) scale(0.93 1)" font-size="7.3" font-weight="normal" fill="#404040" stroke="#404040" stroke-width="0.1" text-anchor="start" >Ladevorgang aktiv</text>
<path d="M682.50,179.74 L679.95,178.27 L679.95,175.33 L682.50,173.86 L685.05,175.33 L685.05,178.27Z" fill="#111" stroke="#111" stroke-width="0.83" stroke-linejoin="round"/>
<circle cx="682.50" cy="176.80" r="1.01" fill="#fff"/>
<path d="M558.50,173.60 H564.50 V180.00 H558.50 L560.90,176.80 Z" fill="#f5aa4c"/>
<path d="M564.50,255.15 H682.75 A5.75,5.75 0 0 1 682.75,266.65 H564.50 Z" fill="#fff" stroke="#555" stroke-width="1"/>
<rect x="594.50" y="256.15" width="83.00" height="9.50" fill="#ebebeb"/>
<line x1="593.5" y1="255.15" x2="593.5" y2="266.65" stroke="#555" stroke-width="1"/>
<text x="579.00" y="264.60" font-size="9.8" font-weight="bold" fill="#1a1a1a" stroke="#1a1a1a" stroke-width="0.22" text-anchor="middle" >M</text>
<text transform="translate(599.50 263.50) scale(0.93 1)" font-size="7.3" font-weight="normal" fill="#404040" stroke="#404040" stroke-width="0.1" text-anchor="start" >Ladeleistung Sollwert</text>
<path d="M682.50,263.84 L679.95,262.37 L679.95,259.43 L682.50,257.96 L685.05,259.43 L685.05,262.37Z" fill="#111" stroke="#111" stroke-width="0.83" stroke-linejoin="round"/>
<circle cx="682.50" cy="260.90" r="1.01" fill="#fff"/>
<path d="M558.50,257.70 H564.50 V264.10 H558.50 L560.90,260.90 Z" fill="#f5aa4c"/>
<path d="M777.50,215.75 H896.75 A5.75,5.75 0 0 1 896.75,227.25 H777.50 Z" fill="#fff" stroke="#555" stroke-width="1"/>
<rect x="807.50" y="216.75" width="84.00" height="9.50" fill="#ebebeb"/>
<line x1="806.5" y1="215.75" x2="806.5" y2="227.25" stroke="#555" stroke-width="1"/>
<text x="792.00" y="225.20" font-size="9.8" font-weight="bold" fill="#1a1a1a" stroke="#1a1a1a" stroke-width="0.22" text-anchor="middle" >M</text>
<text x="812.50" y="225.00" font-size="9.9" font-weight="bold" fill="#2a2a2a" text-anchor="start" >Aktiver Modus</text>
<path d="M896.50,224.44 L893.95,222.97 L893.95,220.03 L896.50,218.56 L899.05,220.03 L899.05,222.97Z" fill="#111" stroke="#111" stroke-width="0.83" stroke-linejoin="round"/>
<circle cx="896.50" cy="221.50" r="1.01" fill="#fff"/>
<path d="M771.50,218.30 H777.50 V224.70 H771.50 L773.90,221.50 Z" fill="#f5aa4c"/></g></svg></body></html>
